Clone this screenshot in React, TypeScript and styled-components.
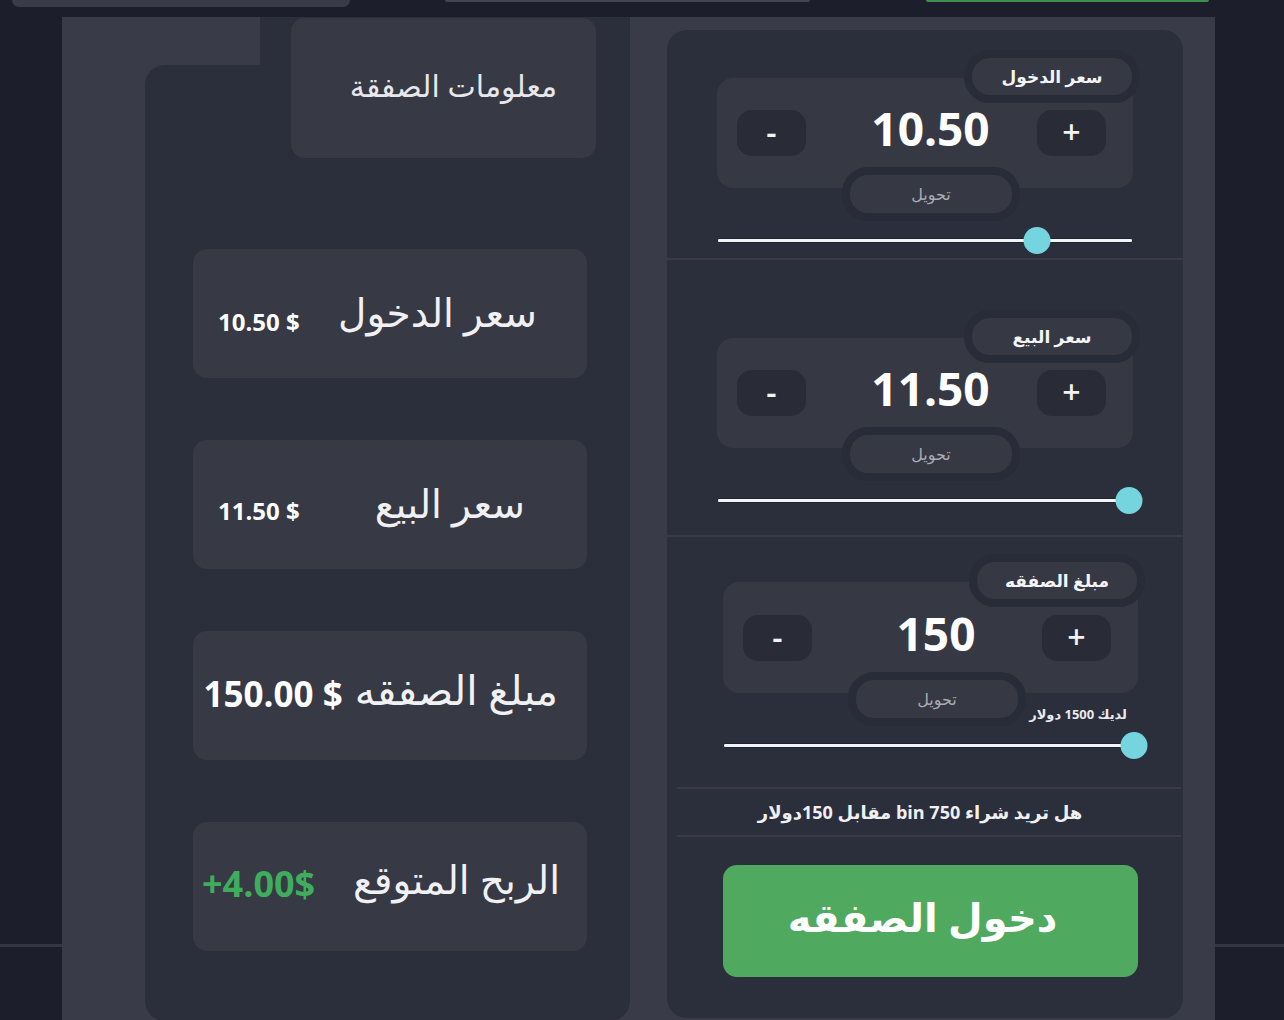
import styled, { createGlobalStyle } from 'styled-components'

const GlobalStyle = createGlobalStyle`
  html, body {
    margin: 0;
    padding: 0;
  }
  body {
    background:
      linear-gradient(to bottom, transparent 944px, #343643 944px, #343643 947px, transparent 947px),
      #1c1e2b;
    font-family: "Open Sans", "DejaVu Sans", sans-serif;
    color: #fff;
    overflow: hidden;
  }
`

const Page = styled.div`
  width: 1284px;
  height: 1020px;
  overflow: hidden;
`

const TopStrip = styled.div`
  display: flex;
  align-items: flex-start;
  height: 17px;
`
const TopTab = styled.div<{ $w: number; $ml: number; $h: number; $bg: string }>`
  width: ${p => p.$w}px;
  margin-left: ${p => p.$ml}px;
  height: ${p => p.$h}px;
  background: ${p => p.$bg};
  border-radius: 0 0 20px 20px;
`

const Frame = styled.div`
  margin-left: 62px;
  width: 1153px;
  background: #393b48;
  display: grid;
  grid-template-columns: 568px 585px;
  padding-bottom: 20px;
`

// left side: info column
const LeftArea = styled.div`
  display: grid;
  grid-template-columns: 83px 115px 31px 305px 34px;
  grid-template-rows: 1px 47px 93px auto;
`
const DarkTab = styled.div`
  grid-column: 3 / 6;
  grid-row: 1 / 3;
  background: #2b2e3b;
`
const DarkColumn = styled.div`
  grid-column: 2 / 6;
  grid-row: 3 / 5;
  background: #2b2e3b;
  border-radius: 20px 0 20px 20px;
`
const HeaderCard = styled.div`
  grid-column: 4;
  grid-row: 2 / 4;
  z-index: 1;
  background: #373945;
  border-radius: 14px;
  direction: rtl;
  display: flex;
  align-items: center;
  justify-content: flex-start;
  padding-right: 39px;
  padding-bottom: 6px;
  font-size: 30px;
  color: #e8e8ec;
`
const CardList = styled.div`
  grid-column: 2 / 6;
  grid-row: 4;
  z-index: 1;
  display: flex;
  flex-direction: column;
  gap: 62px;
  padding: 91px 43px 70px 48px;
`
const InfoCard = styled.div<{ $pad: string; $justify?: string; $gap?: number }>`
  height: 129px;
  background: #373945;
  border-radius: 14px;
  direction: rtl;
  display: flex;
  align-items: center;
  justify-content: ${p => p.$justify || 'space-between'};
  gap: ${p => p.$gap || 0}px;
  padding: ${p => p.$pad};
  box-sizing: border-box;
`
const InfoLabel = styled.span<{ $size?: number }>`
  font-size: ${p => p.$size || 39}px;
  color: #f1f1f4;
  padding-bottom: 4px;
  white-space: nowrap;
`
const InfoValue = styled.span<{ $size: number; $color?: string; $drop?: number }>`
  direction: ltr;
  font-weight: 700;
  font-size: ${p => p.$size}px;
  color: ${p => p.$color || '#fff'};
  padding-top: ${p => p.$drop ?? 6}px;
  white-space: nowrap;
`

// right side: trade panel
const RightArea = styled.div`
  padding: 13px 32px 0 37px;
`
const TradePanel = styled.div`
  background: #2b2e3b;
  border-radius: 20px;
  display: flex;
  flex-direction: column;
`
const Section = styled.div<{ $pad: string }>`
  padding: ${p => p.$pad};
  display: flex;
  flex-direction: column;
`
const Divider = styled.div<{ $inset?: boolean }>`
  height: 2px;
  background: #393b48;
  margin: ${p => (p.$inset ? '0 2px 0 10px' : '0')};
`
const ControlBox = styled.div<{ $h: number }>`
  position: relative;
  height: ${p => p.$h}px;
  background: #363844;
  border-radius: 16px;
  display: flex;
  align-items: center;
  padding: 0 27px 0 20px;
`
const StepButton = styled.div`
  width: 69px;
  height: 46px;
  border-radius: 15px;
  background: #292b37;
  display: flex;
  align-items: center;
  justify-content: center;
  font-size: 32px;
  font-weight: 600;
  color: #f2f2f2;
  padding-bottom: 3px;
  box-sizing: border-box;
`
const BigValue = styled.div`
  flex: 1;
  text-align: center;
  padding-left: 18px;
  margin-bottom: 10px;
  font-size: 46px;
  font-weight: 700;
  color: #fff;
`
const LabelPill = styled.div`
  position: absolute;
  top: -28px;
  right: -7px;
  width: 160px;
  height: 37px;
  border: 8px solid #282b38;
  border-radius: 26px;
  background: #363844;
  display: flex;
  align-items: center;
  justify-content: center;
  direction: rtl;
  font-size: 17px;
  font-weight: 700;
  color: #f4f4f6;
`
const ConvertPill = styled.div`
  position: absolute;
  bottom: -33px;
  left: 125px;
  width: 162px;
  height: 38px;
  border: 8px solid #282b38;
  border-radius: 26px;
  background: #363844;
  display: flex;
  align-items: center;
  justify-content: center;
  font-size: 16px;
  color: #a9abb5;
`
const BalanceNote = styled.div`
  height: 14px;
  margin: 14px 0 11px;
  padding-right: 11px;
  direction: rtl;
  font-size: 13px;
  font-weight: 700;
  line-height: 14px;
  color: #eaeaee;
`
const SliderRow = styled.div<{ $mt: number }>`
  position: relative;
  height: 26px;
  margin-top: ${p => p.$mt}px;
  display: flex;
  align-items: center;
`
const Track = styled.div`
  flex: 1;
  height: 3px;
  background: #f4f4f6;
  border: 1px solid #1e2433;
  border-radius: 2px;
`
const Thumb = styled.div`
  position: absolute;
  top: 0;
  width: 27px;
  height: 27px;
  border-radius: 50%;
  background: #74d5df;
  transform: translateX(-50%);
`
const QuestionRow = styled.div`
  height: 46px;
  display: flex;
  align-items: center;
  justify-content: center;
  direction: rtl;
  font-size: 18px;
  font-weight: 700;
  color: #f0f0f3;
  padding-right: 10px;
`
const EnterButton = styled.div`
  height: 112px;
  border-radius: 14px;
  background: #4fa95e;
  display: flex;
  align-items: center;
  justify-content: center;
  direction: rtl;
  font-size: 40px;
  font-weight: 700;
  color: #fff;
  padding: 0 16px 10px 0;
  box-sizing: border-box;
`

type ControlProps = {
  label: string
  value: string
  pct: number
  height: number
  sliderGap: number
  note?: string
}

function PriceControl({ label, value, pct, height, sliderGap, note }: ControlProps) {
  return (
    <>
      <ControlBox $h={height}>
        <StepButton>-</StepButton>
        <BigValue>{value}</BigValue>
        <StepButton>+</StepButton>
        <LabelPill>{label}</LabelPill>
        <ConvertPill>تحويل</ConvertPill>
      </ControlBox>
      {note && <BalanceNote>{note}</BalanceNote>}
      <SliderRow $mt={sliderGap}>
        <Track />
        <Thumb style={{ left: `${pct}%` }} />
      </SliderRow>
    </>
  )
}

export default function App() {
  return (
    <>
      <GlobalStyle />
      <Page>
        <TopStrip>
          <TopTab $w={338} $ml={12} $h={7} $bg="#393b48" />
          <TopTab $w={365} $ml={95} $h={2} $bg="#434552" />
          <TopTab $w={283} $ml={116} $h={2} $bg="#3e8c50" />
        </TopStrip>
        <Frame>
          <LeftArea>
            <DarkTab />
            <DarkColumn />
            <HeaderCard>معلومات الصفقة</HeaderCard>
            <CardList>
              <InfoCard $pad="0 50px 0 25px">
                <InfoLabel>سعر الدخول</InfoLabel>
                <InfoValue $size={24} $drop={16}>10.50 $</InfoValue>
              </InfoCard>
              <InfoCard $pad="0 62px 0 25px">
                <InfoLabel>سعر البيع</InfoLabel>
                <InfoValue $size={24} $drop={12}>11.50 $</InfoValue>
              </InfoCard>
              <InfoCard $pad="0 29px 10px 9px" $justify="flex-start" $gap={12}>
                <InfoLabel $size={41}>مبلغ الصفقه</InfoLabel>
                <InfoValue $size={35}>150.00 $</InfoValue>
              </InfoCard>
              <InfoCard $pad="0 27px 12px 9px">
                <InfoLabel>الربح المتوقع</InfoLabel>
                <InfoValue $size={36} $color="#3fae5c">+4.00$</InfoValue>
              </InfoCard>
            </CardList>
          </LeftArea>

          <RightArea>
            <TradePanel>
              <Section $pad="48px 50px 5px 50px">
                <PriceControl label="سعر الدخول" value="10.50" pct={77} height={110} sliderGap={39} />
              </Section>
              <Divider />
              <Section $pad="78px 50px 22px 50px">
                <PriceControl label="سعر البيع" value="11.50" pct={99} height={110} sliderGap={39} />
              </Section>
              <Divider />
              <Section $pad="45px 45px 29px 56px">
                <PriceControl
                  label="مبلغ الصفقه"
                  value="150"
                  pct={99}
                  height={111}
                  sliderGap={0}
                  note="لديك 1500 دولار"
                />
              </Section>
              <Divider $inset />
              <QuestionRow>هل تريد شراء 750 bin مقابل 150دولار</QuestionRow>
              <Divider $inset />
              <Section $pad="28px 45px 41px 56px">
                <EnterButton>دخول الصفقه</EnterButton>
              </Section>
            </TradePanel>
          </RightArea>
        </Frame>
      </Page>
    </>
  )
}
